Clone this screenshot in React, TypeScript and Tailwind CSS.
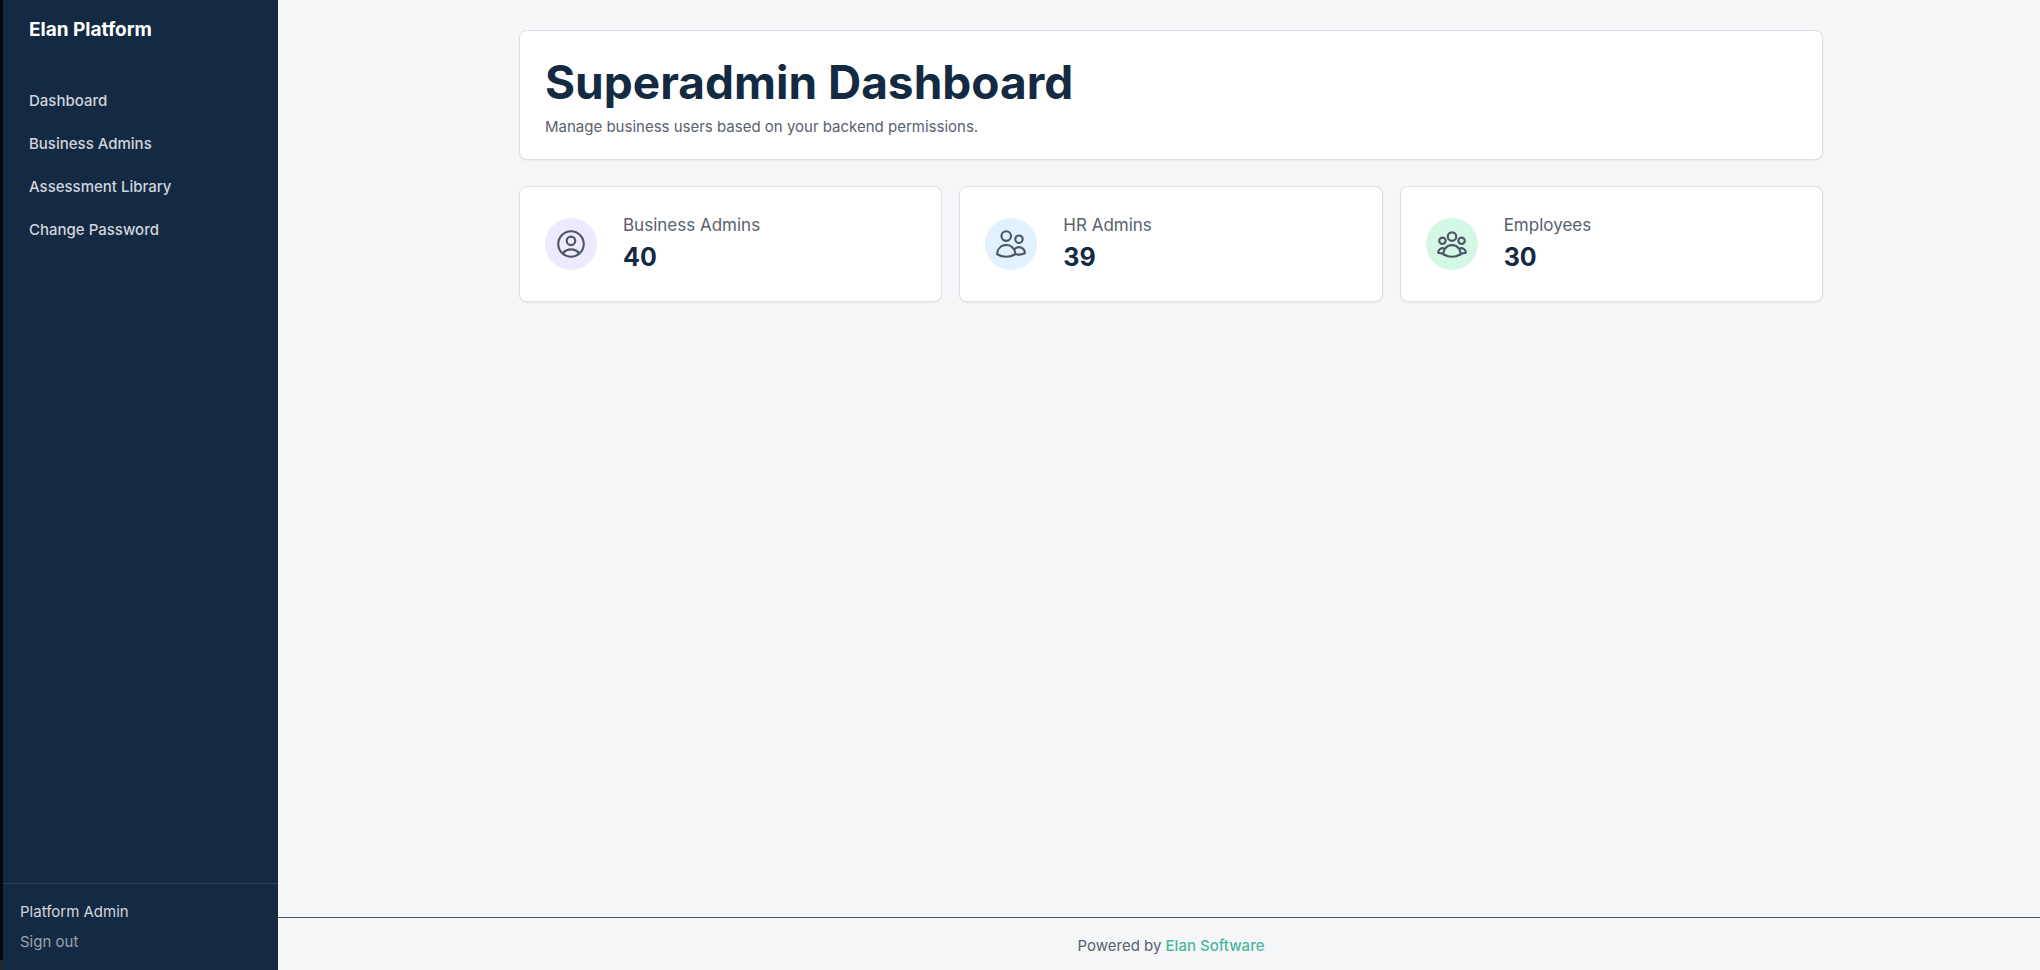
import type { IconType } from 'react-icons'
import { HiOutlineUserCircle, HiOutlineUserGroup, HiOutlineUsers } from 'react-icons/hi2'

interface Stat {
  label: string
  value: number
  icon: IconType
  iconBg: string
}

const NAV_ITEMS: string[] = ['Dashboard', 'Business Admins', 'Assessment Library', 'Change Password']

const STATS: Stat[] = [
  { label: 'Business Admins', value: 40, icon: HiOutlineUserCircle, iconBg: 'bg-[#ede9fe]' },
  { label: 'HR Admins', value: 39, icon: HiOutlineUsers, iconBg: 'bg-[#e2f1fe]' },
  { label: 'Employees', value: 30, icon: HiOutlineUserGroup, iconBg: 'bg-[#d5f8e6]' },
]

function Sidebar() {
  return (
    <aside className="flex w-[275px] shrink-0 flex-col bg-[#142a43]">
      <div className="px-[26px] pt-4 text-[19px] leading-7 font-bold text-white">Elan Platform</div>
      <nav className="mt-[35px] flex flex-col px-[9px]">
        {NAV_ITEMS.map((item) => (
          <a key={item} href="#" className="px-[17px] py-[11px] text-[15px] leading-[21px] font-medium text-[#d1d5db]">
            {item}
          </a>
        ))}
      </nav>
      <div className="mt-auto flex flex-col items-start gap-2 border-t border-[#2c435a] px-[17px] pt-[17px] pb-[17px] text-[15px] leading-[22px]">
        <span className="text-[#d1d5db]">Platform Admin</span>
        <button type="button" className="text-[#9ca3af]">
          Sign out
        </button>
      </div>
    </aside>
  )
}

function StatCard({ stat }: { stat: Stat }) {
  const Icon = stat.icon
  return (
    <div className="flex items-center gap-[26px] rounded-lg border border-[#dce0e4] bg-white p-[25px] shadow-xs">
      <div className={`flex size-[52px] items-center justify-center rounded-full text-[#4b5563] ${stat.iconBg}`}>
        <Icon className="size-[34px]" />
      </div>
      <div>
        <p className="text-[17px] leading-[27px] text-[#59616d]">{stat.label}</p>
        <p className="text-[25px] leading-[37px] font-bold text-[#142a43]">{stat.value}</p>
      </div>
    </div>
  )
}

export default function App() {
  return (
    <div className="flex min-h-screen bg-[#f4f6f8] font-['Inter',sans-serif]">
      <div className="flex w-[3px] shrink-0 flex-col justify-end bg-[#05080c]">
        <div className="h-[10px] bg-[#25272b]" />
      </div>
      <Sidebar />
      <div className="flex min-w-0 flex-1 flex-col">
        <main className="flex-1 pt-[30px] pl-6">
          <div className="mx-auto flex max-w-[1304px] flex-col gap-[26px]">
            <header className="rounded-lg border border-[#dce0e4] bg-white px-[25px] pt-[25px] pb-[21px] shadow-xs">
              <h1 className="text-[46px] leading-[52px] font-bold text-[#142a43]">Superadmin Dashboard</h1>
              <p className="mt-2 text-[15px] leading-[22px] text-[#59616d]">
                Manage business users based on your backend permissions.
              </p>
            </header>
            <section className="grid grid-cols-3 gap-[17px]">
              {STATS.map((stat) => (
                <StatCard key={stat.label} stat={stat} />
              ))}
            </section>
          </div>
        </main>
        <footer className="border-t border-[#4b5563] pt-[17px] pb-[13px] pl-6 text-center text-[15px] leading-[22px] text-[#59616d]">
          Powered by{' '}
          <a href="#" className="font-medium text-[#4cb69f]">
            Elan Software
          </a>
        </footer>
      </div>
    </div>
  )
}
